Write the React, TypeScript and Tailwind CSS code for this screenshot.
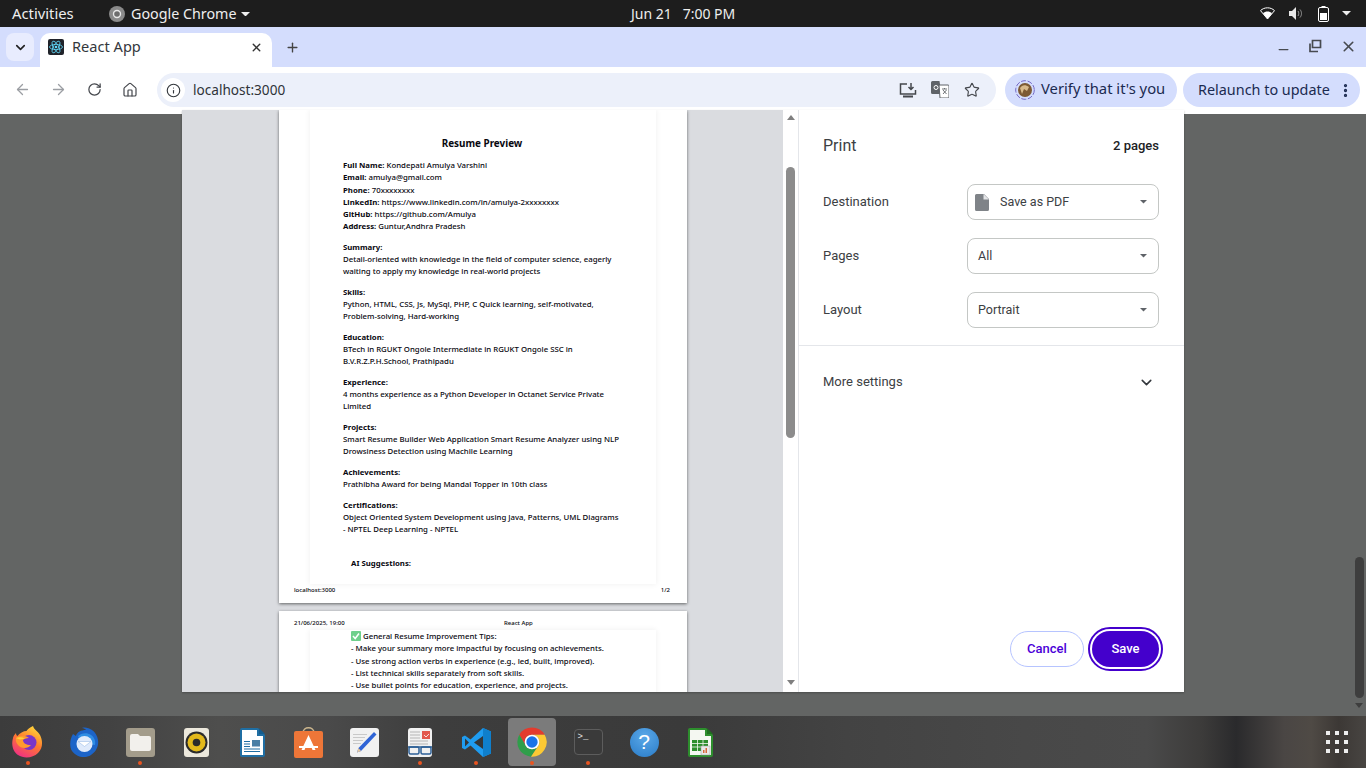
import React from "react";
import { ArrowLeft, ArrowRight, RotateCw, House, Info, Star, X, Plus, ChevronDown, Minus, EllipsisVertical } from "lucide-react";

const Caret = ({ c = "#5f6368", w = 8 }: { c?: string; w?: number }) => (
  <svg width={w} height={w / 2} viewBox="0 0 8 4"><path d="M0 0h8L4 4z" fill={c} /></svg>
);

const ChromeLogo = ({ size = 32 }: { size?: number }) => (
  <svg width={size} height={size} viewBox="0 0 48 48">
    <path d="M5 13A22 22 0 0 1 43 13L24 13A11 11 0 0 0 14.5 29.5Z" fill="#e33b2e" />
    <path d="M5 13A22 22 0 0 0 22.5 46L33.5 29.5A11 11 0 0 1 14.5 29.5Z" fill="#2f9e4a" />
    <path d="M43 13A22 22 0 0 1 22.5 46L33.5 29.5A11 11 0 0 0 24 13Z" fill="#fcc934" />
    <circle cx="24" cy="24" r="11" fill="#fff" />
    <circle cx="24" cy="24" r="8.5" fill="#1a73e8" />
  </svg>
);

const ReactFavicon = () => (
  <svg width="16" height="16" viewBox="0 0 16 16">
    <rect width="16" height="16" rx="2" fill="#20232a" />
    <g fill="none" stroke="#61dafb" strokeWidth="0.8">
      <ellipse cx="8" cy="8" rx="6.5" ry="2.6" />
      <ellipse cx="8" cy="8" rx="6.5" ry="2.6" transform="rotate(60 8 8)" />
      <ellipse cx="8" cy="8" rx="6.5" ry="2.6" transform="rotate(120 8 8)" />
    </g>
    <circle cx="8" cy="8" r="1.3" fill="#61dafb" />
  </svg>
);

const TopBar = () => (
  <div className="h-[27px] bg-[#1d1d1d] flex items-center text-[#eeeeee] text-[14.300px] font-['Noto_Sans',sans-serif] relative shrink-0">
    <span className="ml-3 w-[97px] text-[14.800px]">Activities</span>
    <svg width="16" height="16" viewBox="0 0 16 16">
      <circle cx="8" cy="8" r="8" fill="#8a8a8a" />
      <circle cx="8" cy="8" r="4.2" fill="#e8e8e8" />
      <circle cx="8" cy="8" r="2.8" fill="#6d6d6d" />
    </svg>
    <span className="ml-[6px]">Google Chrome</span>
    <span className="ml-[4px] mt-[1px]"><Caret c="#eeeeee" w={9} /></span>
    <span className="absolute left-[631px] top-[3px] whitespace-pre text-[14px]">Jun 21   7:00 PM</span>
    <div className="ml-auto flex items-center mr-[15px] gap-[14px]">
      <svg width="15" height="13" viewBox="0 0 15 13">
        <path d="M.5 3.600C2.400 1.800 4.800.8 7.500.8s5.100 1 7 2.800L7.500 12z" fill="#1d1d1d" stroke="#fff" strokeWidth="1" />
        <path d="M3 6.200C4.200 5.100 5.800 4.500 7.500 4.500s3.300.6 4.500 1.700L7.500 12z" fill="#fff" />
      </svg>
      <svg width="15" height="13" viewBox="0 0 15 13">
        <path d="M0 4h3l4-4v13L3 9H0z" fill="#e8e8e8" />
        <path d="M9 4c1 1.400 1 3.600 0 5M11 2.500c2 2.400 2 5.600 0 8" fill="none" stroke="#999" strokeWidth="1" />
      </svg>
      <svg width="11" height="16" viewBox="0 0 11 16">
        <rect x="3.500" y="0" width="4" height="2" fill="#fff" />
        <rect x=".5" y="1.500" width="10" height="14" rx="1.500" fill="none" stroke="#fff" />
        <rect x="2" y="7" width="7" height="7" fill="#fff" />
      </svg>
      <span className="-ml-[1px]"><Caret c="#eeeeee" w={9} /></span>
    </div>
  </div>
);

const TabStrip = () => (
  <div className="h-[40px] bg-[#d4ddfd] flex relative shrink-0 font-['Noto_Sans',sans-serif]">
    <div className="ml-[6px] mt-[6px] w-[28px] h-[28px] rounded-[8px] bg-[#e8ecfe] flex items-center justify-center">
      <ChevronDown size={15} strokeWidth={2.6} className="text-[#222]" />
    </div>
    <div className="ml-[6px] mt-[6px] w-[232px] h-[34px] bg-white rounded-t-[10px] flex items-center pl-[8px] pr-[9px] pb-[6px]">
      <ReactFavicon />
      <span className="ml-2 text-[14.600px] text-[#33373c]">React App</span>
      <X size={13} strokeWidth={2.6} className="ml-auto text-[#333]" />
    </div>
    <div className="ml-[13px] mt-[6px] h-[28px] flex items-center">
      <Plus size={15} strokeWidth={2.2} className="text-[#444]" />
    </div>
    <div className="ml-auto mr-[9px] flex items-center gap-[17px] text-[#474a50] mb-[1px]">
      <Minus size={15} strokeWidth={2} className="mt-[6px]" />
      <svg width="15" height="15" viewBox="0 0 15 15" fill="none" stroke="currentColor" strokeWidth="1.700">
        <path d="M4.500 1.500h8v7h-8zM2 4.500v8h8" />
      </svg>
      <X size={17} strokeWidth={2.3} />
    </div>
  </div>
);

const Toolbar = () => (
  <div className="h-[47px] bg-white flex pt-[6px] shrink-0 rounded-tl-[8px] rounded-tr-[8px] font-['Noto_Sans',sans-serif]">
    <div className="w-[157px] h-[34px] flex items-center text-[#9b9ea3] pb-[1px]">
      <ArrowLeft size={17} strokeWidth={1.800} className="ml-[14px]" />
      <ArrowRight size={17} strokeWidth={1.800} className="ml-[19px]" />
      <RotateCw size={15} strokeWidth={2} className="ml-[20px] text-[#44474c]" />
      <House size={16} strokeWidth={1.800} className="ml-[20px] text-[#44474c]" />
    </div>
    <div className="w-[839px] h-[34px] rounded-full bg-[#ecf0fa] flex items-center pl-[4px] pr-[16px]">
      <div className="w-6 h-6 rounded-full bg-white flex items-center justify-center">
        <Info size={15} strokeWidth={1.800} className="text-[#33373c]" />
      </div>
      <span className="ml-2 text-[13.600px] text-[#2f3338]">localhost:3000</span>
      <div className="ml-auto flex items-center gap-[14px] text-[#44474c] mb-[1px]">
        <svg width="18" height="16" viewBox="0 0 18 16" fill="none" stroke="currentColor" strokeWidth="1.500">
          <path d="M8 2H1.500v10h15V8" />
          <path d="M4 14.500h10" strokeWidth="2" />
          <path d="M12 1v6M9.500 5l2.500 2.500L14.500 5" />
        </svg>
        <svg width="18" height="17" viewBox="0 0 18 17">
          <path d="M1.500 0h7l2 13h-9A1.500 1.500 0 0 1 0 11.500V1.500A1.500 1.500 0 0 1 1.500 0z" fill="#5f6368" />
          <path d="M8 4h9a1 1 0 0 1 1 1v11a1 1 0 0 1-1 1H9z" fill="#fff" stroke="#5f6368" />
          <circle cx="5" cy="6.500" r="2" fill="none" stroke="#fff" strokeWidth="1" />
          <path d="M11 8h5M13.500 7v1M12 13l3.500-4M12 9l3.500 4" stroke="#5f6368" strokeWidth="0.900" fill="none" />
        </svg>
        <Star size={16} strokeWidth={1.700} className="ml-[1px]" />
      </div>
    </div>
    <div className="ml-[9px] w-[172px] h-[34px] rounded-full bg-[#d4ddfd] flex items-center pl-[10px] text-[14.800px] text-[#1b2a50]">
      <svg width="20" height="20" viewBox="0 0 20 20">
        <circle cx="10" cy="10" r="9.300" fill="none" stroke="#6a5cc0" strokeWidth="0.900" strokeDasharray="5 1.600" />
        <circle cx="10" cy="10" r="7" fill="#7d5a34" />
        <path d="M5 8c2-3 5-4 9-1l-2 4-3-2-2 5z" fill="#d8b98a" />
      </svg>
      <span className="ml-[6px] whitespace-nowrap mb-[3px]">Verify that it's you</span>
    </div>
    <div className="ml-[6px] w-[177px] h-[34px] rounded-full bg-[#d4ddfd] flex items-center pl-[15px] text-[14.400px] text-[#1b2a50]">
      <span className="whitespace-nowrap mb-[1px]">Relaunch to update</span>
      <EllipsisVertical size={17} strokeWidth={2.600} className="ml-auto mr-[6px]" />
    </div>
  </div>
);

const Sec = ({ title, lines }: { title: string; lines: string[] }) => (
  <div className="mt-[8.300px]">
    <div className="font-bold">{title}</div>
    {lines.map((l) => (
      <div key={l}>{l}</div>
    ))}
  </div>
);

const Kv = ({ k, v }: { k: string; v: string }) => (
  <div>
    <b>{k}</b> {v}
  </div>
);

const Preview = () => (
  <div className="w-[601px] bg-[#dadce0] overflow-hidden flex flex-col items-center pl-[1px] font-['Noto_Sans',sans-serif] font-medium text-[7.800px] leading-[12.250px] text-[#08080f]">
    {/* page 1 */}
    <div className="w-[408px] h-[493px] shrink-0 bg-white shadow-[0_1px_3px_rgba(0,0,0,0.55)] relative flex justify-center">
      <div className="w-[346px] h-[474px] shadow-[0_0_6px_rgba(0,0,0,0.07)] pl-[33px] pt-[26px]">
        <div className="w-[278px] text-[9.900px] font-bold text-center leading-[14px] mb-[9px]">Resume Preview</div>
        <Kv k="Full Name:" v="Kondepati Amulya Varshini" />
        <Kv k="Email:" v="amulya@gmail.com" />
        <Kv k="Phone:" v="70xxxxxxxx" />
        <Kv k="LinkedIn:" v="https://www.linkedin.com/in/amulya-2xxxxxxxx" />
        <Kv k="GitHub:" v="https://github.com/Amulya" />
        <Kv k="Address:" v="Guntur,Andhra Pradesh" />
        <Sec title="Summary:" lines={["Detail-oriented with knowledge in the field of computer science, eagerly", "waiting to apply my knowledge in real-world projects"]} />
        <Sec title="Skills:" lines={["Python, HTML, CSS, Js, MySql, PHP, C Quick learning, self-motivated,", "Problem-solving, Hard-working"]} />
        <Sec title="Education:" lines={["BTech in RGUKT Ongole Intermediate in RGUKT Ongole SSC in", "B.V.R.Z.P.H.School, Prathipadu"]} />
        <Sec title="Experience:" lines={["4 months experience as a Python Developer in Octanet Service Private", "Limited"]} />
        <Sec title="Projects:" lines={["Smart Resume Builder Web Application Smart Resume Analyzer using NLP", "Drowsiness Detection using Machile Learning"]} />
        <Sec title="Achievements:" lines={["Prathibha Award for being Mandal Topper in 10th class"]} />
        <Sec title="Certifications:" lines={["Object Oriented System Development using Java, Patterns, UML Diagrams", "- NPTEL Deep Learning - NPTEL"]} />
        <div className="font-bold ml-[8px] mt-[21px]">AI Suggestions:</div>
      </div>
      <span className="absolute left-[15px] bottom-[7px] text-[6px] leading-[12px]">localhost:3000</span>
      <span className="absolute right-[17px] bottom-[7px] text-[6px] leading-[12px]">1/2</span>
    </div>
    {/* page 2 */}
    <div className="mt-[8px] w-[408px] h-[200px] shrink-0 bg-white shadow-[0_1px_3px_rgba(0,0,0,0.55)] flex flex-col items-center relative">
      <div className="w-[346px] mt-[19px] h-[100px] shadow-[0_0_6px_rgba(0,0,0,0.07)] pl-[41px]">
        <div className="flex items-center gap-[2px]">
          <svg width="10" height="10" viewBox="0 0 10 10" className="shrink-0">
            <rect width="10" height="10" rx="1" fill="#6fd08c" />
            <path d="M2 5l2.200 2.500L8 2.500" fill="none" stroke="#fff" strokeWidth="1.500" />
          </svg>
          <span>General Resume Improvement Tips:</span>
        </div>
        <div>- Make your summary more impactful by focusing on achievements.</div>
        <div>- Use strong action verbs in experience (e.g., led, built, improved).</div>
        <div>- List technical skills separately from soft skills.</div>
        <div>- Use bullet points for education, experience, and projects.</div>
      </div>
      <span className="absolute left-[15px] top-[6px] text-[6px] leading-[12px]">21/06/2025, 19:00</span>
      <span className="absolute left-[225px] top-[6px] text-[6px] leading-[12px]">React App</span>
    </div>
  </div>
);

const PreviewScroll = () => (
  <div className="w-[15px] bg-white flex flex-col items-center relative shrink-0">
    <div className="mt-[5px] mb-[47px] w-0 h-0 border-x-[4.500px] border-x-transparent border-b-[5px] border-b-[#7f7f7f]" />
    <div className="w-[9px] h-[271px] rounded-full bg-[#8c8c8c]" />
    <div className="mt-auto mb-[7px] w-0 h-0 border-x-[4.500px] border-x-transparent border-t-[5px] border-t-[#7f7f7f]" />
  </div>
);

const SelectRow = ({ label, value, icon }: { label: string; value: string; icon?: boolean }) => (
  <div className="flex items-center justify-between h-[36px] mb-[18px]">
    <span className="text-[13px] text-[#3c4043]">{label}</span>
    <div className="w-[192px] h-[36px] rounded-[8px] border border-[#c4c7c5] flex items-center pl-[10px] pr-[11px] text-[#3c4043] text-[12.500px]">
      {icon && (
        <svg width="14" height="17" viewBox="0 0 14 17" className="mr-[11px] -ml-[3px]">
          <path d="M1.500 0H9l5 5v10.500a1.500 1.500 0 0 1-1.500 1.500h-11A1.500 1.500 0 0 1 0 15.500v-14A1.500 1.500 0 0 1 1.500 0z" fill="#7f8388" />
          <path d="M8.500 0v5.500H14z" fill="#e4e5e7" />
        </svg>
      )}
      <span>{value}</span>
      <span className="ml-auto"><Caret w={7} /></span>
    </div>
  </div>
);

const Sidebar = () => (
  <div className="flex-1 bg-white border-l border-[#e4e6ea] flex flex-col font-['Roboto',sans-serif]">
    <div className="pl-[24px] pr-[25px] pt-[19px] flex items-center justify-between h-[74px] pb-[21px]">
      <span className="text-[16px] text-[#3c4043]">Print</span>
      <span className="text-[13px] font-medium text-[#202124]">2 pages</span>
    </div>
    <div className="pl-[24px] pr-[25px] border-b border-[#e4e6ea] h-[162px]">
      <SelectRow label="Destination" value="Save as PDF" icon />
      <SelectRow label="Pages" value="All" />
      <SelectRow label="Layout" value="Portrait" />
    </div>
    <div className="pl-[24px] pr-[25px] mt-[18px] h-[36px] flex items-center justify-between">
      <span className="text-[13px] text-[#3c4043]">More settings</span>
      <ChevronDown size={17} strokeWidth={2.200} className="text-[#33373c] mr-[4px]" />
    </div>
    <div className="mt-auto flex justify-end items-center gap-[4px] pr-[21px] pb-[21px]">
      <button className="w-[74px] h-[36px] rounded-full border border-[#b6c4ff] text-[#4a00d8] text-[13px] font-medium">Cancel</button>
      <div className="w-[75px] h-[44px] rounded-full border-2 border-[#4400cc] p-[2px]">
        <button className="w-full h-full rounded-full bg-[#4400cc] text-white text-[13px] font-medium">Save</button>
      </div>
    </div>
  </div>
);

const Firefox = () => (
  <svg width="32" height="32" viewBox="0 0 32 32">
    <defs>
      <linearGradient id="ffa" x1="0.700" y1="0" x2="0.200" y2="1">
        <stop offset="0" stopColor="#ffd43a" />
        <stop offset="0.450" stopColor="#ff7a2e" />
        <stop offset="1" stopColor="#ee2a8a" />
      </linearGradient>
    </defs>
    <path d="M21 0c1 4 5 5 7 9 3 6 3 13-2 18-5 5-14 6-20 2C1 26-1 19 1 12c.5-2 1.500-3.500 3-5 0 1.500.5 2.500 1.500 3 2-3 6-5 9-5 1-2 3-3 6.500-5z" fill="url(#ffa)" />
    <circle cx="17" cy="16.500" r="7.500" fill="#7a35c9" />
    <path d="M4 12c4-3 9-3 13 0-3 0-5 1-6 2 0 3 3 5 8 5-3 4-10 4-13 0-2-2-2.500-5-2-7z" fill="#ff9a2e" />
    <path d="M4 12c3-1 6-1 9 .5l-5 1z" fill="#ffd43a" />
  </svg>
);

const Thunderbird = () => (
  <svg width="32" height="32" viewBox="0 0 32 32">
    <path d="M5 8C2 13 1 20 4 25c4 6 13 8 19 4 5-3 8-9 7-15-.5-4-3-8-6-10-3-2-7-3-10-2 2 0 3 1 4 2C13 4 9 6 8 10c-1-1-2-1-3-2z" fill="#1c64c8" />
    <path d="M10 10c3-3 9-4 13-1 3 2 5 6 4 10l-14-2z" fill="#2f8de4" />
    <circle cx="16.500" cy="18" r="8" fill="#dfeafb" />
    <path d="M10 15.500h13l-6.500 5z" fill="#fff" stroke="#9dbde8" strokeWidth="0.600" />
  </svg>
);

const Files = () => (
  <div className="w-[29px] h-[29px] rounded-[3px] bg-[#a39c8b] flex items-center justify-center">
    <svg width="21" height="17" viewBox="0 0 21 17">
      <path d="M2 0h6l2 2h9a2 2 0 0 1 2 2v11a2 2 0 0 1-2 2H2a2 2 0 0 1-2-2V2a2 2 0 0 1 2-2z" fill="#f2f0ec" />
    </svg>
  </div>
);

const Rhythmbox = () => (
  <div className="w-[25px] h-[29px] rounded-[3px] bg-[#ece8dc] flex items-center justify-center">
    <svg width="23" height="23" viewBox="0 0 23 23">
      <circle cx="11.500" cy="11.500" r="11" fill="#2b2b2b" />
      <circle cx="11.500" cy="11.500" r="9" fill="#e3b91b" />
      <circle cx="11.500" cy="11.500" r="3.800" fill="#2b2b2b" />
    </svg>
  </div>
);

const Writer = () => (
  <svg width="25" height="29" viewBox="0 0 25 29">
    <path d="M2 0h16l7 7v20a2 2 0 0 1-2 2H2a2 2 0 0 1-2-2V2a2 2 0 0 1 2-2z" fill="#1f6ea3" />
    <path d="M2 2h15v6h6v19H2z" fill="#fff" />
    <path d="M19 0l6 6h-6z" fill="#155d8e" />
    <path d="M4 13h6v1H4zM4 15.500h6v1H4zM4 18h6v1H4zM4 20.500h16v1H4zM4 23h16v1H4z" fill="#1f6ea3" />
    <rect x="12" y="12" width="8" height="6.500" fill="#4a7fa5" />
  </svg>
);

const Software = () => (
  <svg width="29" height="31" viewBox="0 0 29 31">
    <path d="M9 6c0-7 11-7 11 0" fill="none" stroke="#cdb78e" strokeWidth="1.500" />
    <rect y="4" width="29" height="27" rx="2" fill="#ee7638" />
    <path d="M14.500 8l-7 15h3l1.500-4h5l1.500 4h3z" fill="#fff" />
    <rect x="5" y="19" width="19" height="2" fill="#fff" />
  </svg>
);

const Editor = () => (
  <div className="w-[29px] h-[29px] rounded-[3px] bg-[#f1f1f1] relative overflow-hidden">
    <div className="flex flex-col gap-[2px] pt-[6px] pl-[3px]">
      <div className="w-[14px] h-px bg-[#c9c9c9]" />
      <div className="w-[12px] h-px bg-[#c9c9c9]" />
      <div className="w-[10px] h-px bg-[#c9c9c9]" />
      <div className="w-[8px] h-px bg-[#c9c9c9]" />
    </div>
    <svg width="29" height="29" viewBox="0 0 29 29" className="absolute inset-0">
      <path d="M24 4l2.500 2.500L11 23l-4 1.500L8.500 20z" fill="#2f64d6" />
      <path d="M8.500 20L11 23l-4 1.500z" fill="#e6c9a0" />
    </svg>
  </div>
);

const Reader = () => (
  <div className="w-[24px] h-[29px] rounded-[3px] bg-[#f1f1f1] relative overflow-hidden">
    <svg width="24" height="29" viewBox="0 0 24 29">
      <path d="M2 4h10M2 7h10M2 10h10M2 13h18M2 16h18" stroke="#b5b5b5" strokeWidth="1" />
      <rect x="14" y="3" width="8" height="8" fill="#e2574c" />
      <path d="M16 7l2 2 3-3" fill="none" stroke="#fff" strokeWidth="0.800" />
      <rect x="1" y="19" width="10" height="7" rx="1.500" fill="none" stroke="#2d5f96" strokeWidth="1.500" />
      <rect x="13" y="19" width="10" height="7" rx="1.500" fill="none" stroke="#2d5f96" strokeWidth="1.500" />
      <path d="M0 19h24" stroke="#2d5f96" strokeWidth="1.500" />
    </svg>
  </div>
);

const VsCode = () => (
  <svg width="29" height="29" viewBox="0 0 29 29">
    <path d="M21 0l8 3.500v22L21 29 8.500 17.500 3 21.500 0 20V9l3-1.500 5.500 4z" fill="#1f9cf0" />
    <path d="M21 0l8 3.500v22L21 29z" fill="#0f7fcc" />
    <path d="M21 8L12 14.500 21 21z" fill="#343638" />
    <path d="M3 10.500L7 14.500 3 18.500z" fill="#343638" />
  </svg>
);

const Terminal = () => (
  <div className="w-[29px] h-[26px] rounded-[4px] bg-[#3a3a3a] border border-[#5d5d5d] font-['Liberation_Mono',monospace] text-[9px] leading-[10px] text-[#e6e6e6] pl-[3px] pt-[2px]">
    &gt;_
  </div>
);

const Help = () => (
  <div className="w-[29px] h-[29px] rounded-full bg-[radial-gradient(circle_at_50%_30%,#5aa8e8,#2a7cc8)] flex items-center justify-center text-white text-[21px] font-['Liberation_Sans',sans-serif]">
    ?
  </div>
);

const Calc = () => (
  <svg width="25" height="29" viewBox="0 0 25 29">
    <path d="M2 0h16l7 7v20a2 2 0 0 1-2 2H2a2 2 0 0 1-2-2V2a2 2 0 0 1 2-2z" fill="#2d8e2d" />
    <path d="M2 2h15v6h6v19H2z" fill="#f4f7f1" />
    <path d="M19 0l6 6h-6z" fill="#1f6f1f" />
    <path d="M4 12h16v11H4z" fill="#2d8e2d" />
    <path d="M4 15.500h16M4 19h16M9.500 12v11M15 12v11" stroke="#f4f7f1" strokeWidth="0.800" />
    <rect x="13" y="18" width="9" height="9" fill="#e8e8e8" stroke="#999" strokeWidth="0.500" />
    <path d="M15 25v-3h1.500v3zM17.500 25v-5H19v5z" fill="#d8663a" />
  </svg>
);

const dockItems: { el: React.ReactNode; dot?: boolean; active?: boolean }[] = [
  { el: <Firefox />, dot: true },
  { el: <Thunderbird /> },
  { el: <Files />, dot: true },
  { el: <Rhythmbox /> },
  { el: <Writer /> },
  { el: <Software /> },
  { el: <Editor /> },
  { el: <Reader />, dot: true },
  { el: <VsCode />, dot: true },
  { el: <ChromeLogo />, dot: true, active: true },
  { el: <Terminal />, dot: true },
  { el: <Help /> },
  { el: <Calc /> },
];

const Dock = () => (
  <div className="h-[52px] shrink-0 flex items-center bg-[linear-gradient(90deg,#3c3c3c_0%,#424242_8%,#4e4e4d_16%,#4a4a4a_24%,#3d3d3d_32%,#3a3a3a_50%,#434343_62%,#484848_75%,#4a4a4a_84%,#3c3b3a_88%,#2a2a2c_90.500%,#4a4644_94%,#4f4a45_96%,#3c3835_98%,#484542_100%)]">
    {dockItems.map((d, i) => (
      <div key={i} className="w-[56px] h-full flex items-center justify-center">
        <div className={`w-[48px] h-[48px] rounded-[4px] relative flex items-center justify-center ${d.active ? "bg-[#7b7b7b]" : ""}`}>
          {d.el}
          {d.dot && <span className="absolute bottom-[1px] left-[22px] w-1 h-1 rounded-full bg-[#e95420]" />}
        </div>
      </div>
    ))}
    <div className="ml-auto mr-[18px] grid grid-cols-3 gap-[5px]">
      {Array.from({ length: 9 }).map((_, i) => (
        <span key={i} className="w-1 h-1 bg-[#eeeeee]" />
      ))}
    </div>
  </div>
);

export default function App() {
  return (
    <div className="w-[1366px] h-[768px] flex flex-col overflow-hidden relative">
      <TopBar />
      <TabStrip />
      <Toolbar />
      {/* page behind the dialog */}
      <div className="flex-1 bg-[#636564] flex justify-end">
        <div className="w-[14px] h-full flex flex-col items-center">
          <div className="mt-[443px] w-[9px] h-[141px] rounded-full bg-[#3e3e3e]" />
          <div className="mt-[5px] w-0 h-0 border-x-[4.500px] border-x-transparent border-t-[5px] border-t-[#3e3e3e]" />
        </div>
      </div>
      <Dock />
      {/* print dialog */}
      <div className="absolute left-[182px] top-[110px] w-[1002px] h-[582px] flex shadow-[0_1px_2px_rgba(0,0,0,0.25)]">
        <Preview />
        <PreviewScroll />
        <Sidebar />
      </div>
    </div>
  );
}
